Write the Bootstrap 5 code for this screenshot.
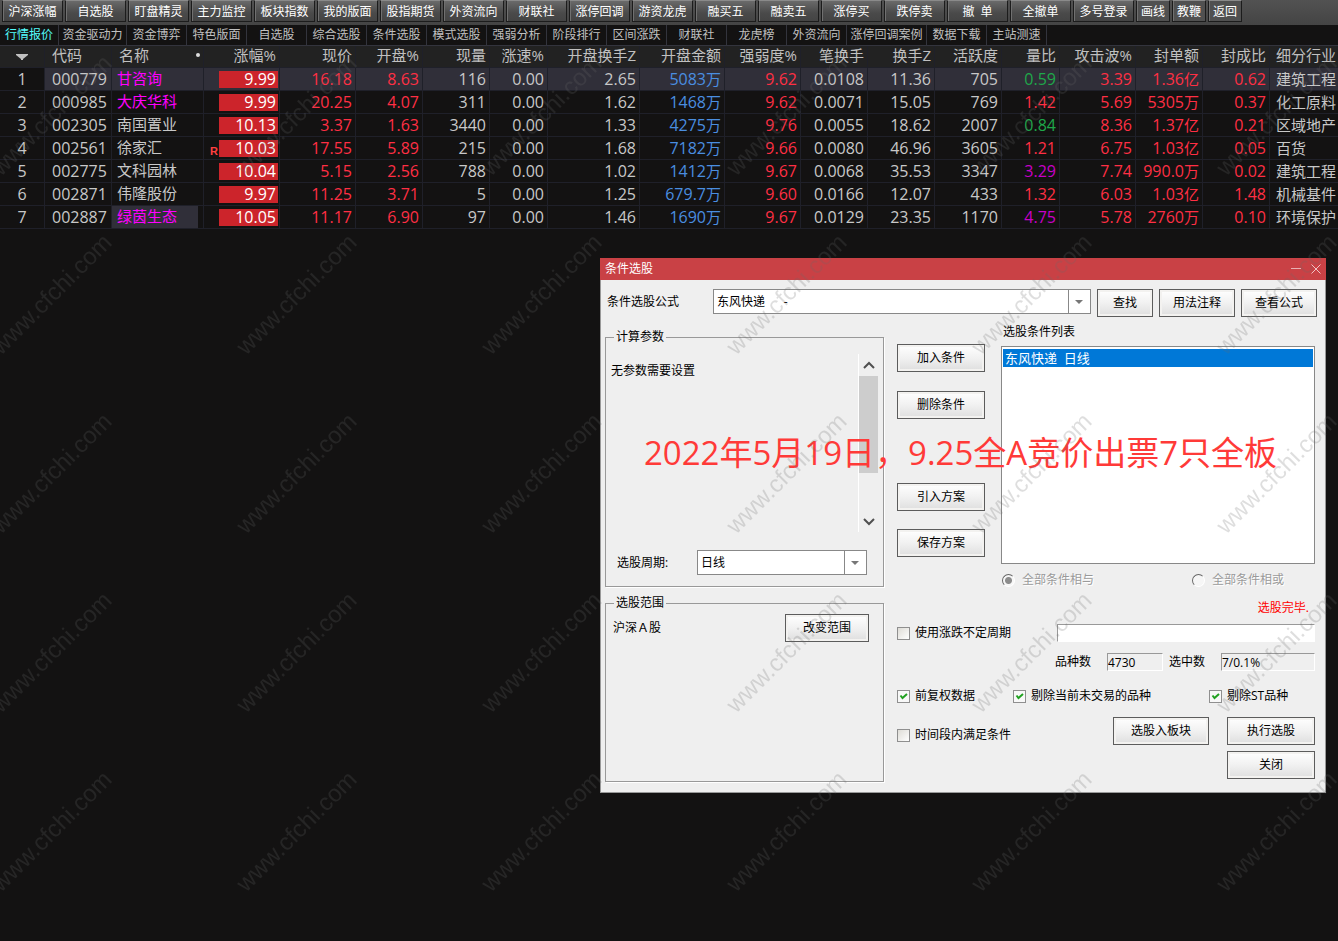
<!DOCTYPE html>
<html lang="zh-CN">
<head>
<meta charset="utf-8">
<meta name="viewport" content="width=device-width, initial-scale=1">
<title>条件选股</title>
<link href="https://cdn.jsdelivr.net/npm/bootstrap@5.3.0/dist/css/bootstrap.min.css" rel="stylesheet">
<style>
body{background:#131212;color:#c0c0c0;font-family:"Open Sans","Noto Sans CJK SC",sans-serif;font-size:12px;line-height:18px;overflow-x:hidden}
/* toolbar */
.toolbar{background:linear-gradient(#525252,#444);height:25px;padding:0 2px;gap:2px}
.tool-btn{flex:none;width:61px;height:22px;padding:0;font-size:12px;line-height:22px;color:#fff;border:1px solid #1c1c1c;border-top-color:#8a8a8a;border-radius:0;background:linear-gradient(#6a6a6a,#4a4a4a 60%,#444);box-shadow:inset 1px 0 0 #707070;white-space:pre}
.tool-btn.narrow{width:34px;background:#505050}
.tool-btn:hover{color:#fff}
/* view tabs */
.views{height:21px;border-bottom:1px solid #33343d}
.views a{flex:none;width:60px;text-align:center;line-height:20px;color:#c0c0c0;text-decoration:none;border-right:1px solid #33343d;white-space:nowrap}
.views a.w-first{width:59px}.views a.w-mid{width:68px}.views a.w-long{width:80px}
.views a.active{color:#54fcfc}
/* quotes */
.quotes{table-layout:fixed;width:100%;margin:0;border-collapse:separate;border-spacing:0;font-size:16px;line-height:22px;color:#c8c8c8}
.q45{width:45px}.q58{width:58px}.q67{width:67px}.q76{width:76px}.q85{width:85px}.q92{width:92px}
.quotes th,.quotes td{padding:0 3px 0 0;height:23px;border-right:1px solid #1f2029;border-bottom:1px solid #1f2029;text-align:right;white-space:nowrap;overflow:hidden}
.quotes th{font-size:15px;font-weight:400;background:#222;line-height:18px;height:22px;color:#c0c0c0;vertical-align:top}
.quotes .idx{text-align:center;padding:0;vertical-align:middle}
.quotes .code{text-align:left;padding-left:7px}
.quotes .stock{text-align:left;padding-left:5px;font-size:15px;line-height:20px;vertical-align:top}
.quotes th.stock{padding-left:7px;line-height:18px}
.quotes .ind{text-align:left;padding-left:6px;font-size:15px;border-right:0}
.quotes .chg{padding:0 1px 0 15px;position:relative;overflow:visible}
.quotes th.chg{padding:0 3px 0 0}
.chg div{background:#cc242b;color:#fff;line-height:17px;height:17px;padding-right:2px}
.chg i{position:absolute;left:6px;bottom:1px;font:bold 11px/14px "Liberation Sans",sans-serif;color:#ff4040}
.unit{font-size:15px}
.picked td:not(.idx){background:#302f39}
.quotes .hold{color:#f0f}
.held{background:linear-gradient(#302f39,#302f39) 0 0/86px 100% no-repeat}
.r{color:#ff2f44}.b{color:#4a8ee0}.g{color:#1fa84a}.m{color:#c800c8}
/* dialog */
.dlg{width:726px;max-width:100%;margin:29px 12px 0 auto;background:#efefef;border:1px solid #999;border-top:0;color:#000}
.dlg-title{height:22px;margin:0 -1px;padding:0 5px;background:#c94145;color:#fff}
.dlg-title button{border:0;background:none;padding:0;width:10px;height:20px;display:flex;align-items:center}
.dlg-title button+button{margin-left:10px}
.dlg-body{padding:9px 8px 10px 4px}
.push{height:28px;padding:0;font-size:12px;line-height:24px;color:#000;border:1px solid #5c5c5c;border-radius:0;background:linear-gradient(#fff,#f1f1f1 50%,#dedede);box-shadow:inset 0 0 0 2px #f3f2f0;width:88px}
.push.s{width:56px}.push.m2{width:76px}.push.l{width:96px}.push.ml{width:84px}
.pick{height:25px;padding:0 24px 0 3px;font-size:12px;line-height:23px;color:#000;border:1px solid #888;border-radius:0;background:url("data:image/svg+xml,%3Csvg xmlns='http://www.w3.org/2000/svg' width='22' height='23'%3E%3Cpath d='M.5 0v23' stroke='%23888'/%3E%3Cpath d='M7 10h8l-4 4z' fill='%23777'/%3E%3C/svg%3E") right center/22px 23px no-repeat #fff}
.formula-label{flex:none;width:108px;padding:4px 0 0 2px}
.acts{gap:6px;margin-left:6px}
.col-left{flex:none;width:279px}
.group{border:1px solid #999;box-shadow:1px 1px 0 #fff;padding:0 5px;margin:0}
.group legend{float:none;width:auto;margin:0 0 0 3px;padding:0 2px;font-size:12px;line-height:18px}
.params{height:259px;margin-top:11px}
.scope{height:188px;margin-top:7px}
.param-view{height:178px;margin-top:8px}
.vbar{width:20px;border-left:1px solid #fff}
.vbar span{height:97px;background:#cdcdcd}
.period{margin:18px 11px 0 6px}.period label{width:80px}.period .pick{width:170px}
.scope-row{margin:2px 9px 0 2px}
.col-right{padding:5px 2px 0 13px}
.moves{width:88px;padding-top:22px}
.moves .push+.push{margin-top:18px}.moves .push.far{margin-top:64px}.moves .push.near{margin-top:19px}
.list-label{padding-left:2px;line-height:20px}
.cond{height:218px;border:1px solid #888;background:#fff;padding:2px 1px;margin:4px 0 0;list-style:none;font-size:13px}
.cond li{background:#0078d7;color:#fff;padding:0 2px;line-height:18px;white-space:pre}
.tick{appearance:none;flex:none;width:13px;height:13px;margin:0 5px 0 0;border:1px solid #8f8f8f;background:linear-gradient(135deg,#dedcd6,#fff)}
.tick:checked{background:url("data:image/svg+xml,%3Csvg xmlns='http://www.w3.org/2000/svg' width='11' height='11'%3E%3Cpath d='M2.5 4.5l2 2.5L9 3' fill='none' stroke='%2321a121' stroke-width='2'/%3E%3C/svg%3E") center no-repeat #f8f8f8}
.dot{appearance:none;flex:none;width:13px;height:13px;margin:0 7px 0 1px;border:1px solid;border-color:#666 #fff #fff #666;border-radius:50%;background:#f6f6f6}
.dot:checked{background:radial-gradient(circle,#8c8c8c 3px,#f6f6f6 4px)}
.mute{color:#9a9a9a;text-shadow:1px 1px 0 #fff}
.sunk{height:18px;padding:0;font-size:12px;line-height:16px;border:1px solid;border-color:#999 #fff #fff #999;border-radius:0;background:#efefef;color:#000}
.sunk.blank{background:#fff;min-width:0}
.c116{width:116px}.c196{width:196px}.c160{width:160px}.c52{width:52px}.c56{width:56px}.c94{width:94px}.c190{width:190px}
.radios{margin-top:6px;height:20px}
.status{margin-top:9px;color:#f00;padding-right:6px}
.run-row{margin-top:6px;height:20px}
.count-row{margin-top:10px}
.hits{margin-left:6px}
.tick-row{margin-top:16px}
.btn-row{margin-top:12px;height:28px}
.go{margin-left:18px}
.close-row{margin-top:6px}
.caption{position:absolute;left:43px;top:172px;font-size:33px;line-height:46px;color:#ff3a38;white-space:nowrap;pointer-events:none;margin:0}
.wm{position:fixed;inset:0;width:100%;height:100%;pointer-events:none}
</style>
</head>
<body class="min-vh-100">
<nav class="toolbar d-flex overflow-hidden">
<button class="btn tool-btn">沪深涨幅</button><button class="btn tool-btn">自选股</button><button class="btn tool-btn">盯盘精灵</button><button class="btn tool-btn">主力监控</button><button class="btn tool-btn">板块指数</button><button class="btn tool-btn">我的版面</button><button class="btn tool-btn">股指期货</button><button class="btn tool-btn">外资流向</button><button class="btn tool-btn">财联社</button><button class="btn tool-btn">涨停回调</button><button class="btn tool-btn">游资龙虎</button><button class="btn tool-btn">融买五</button><button class="btn tool-btn">融卖五</button><button class="btn tool-btn">涨停买</button><button class="btn tool-btn">跌停卖</button><button class="btn tool-btn">撤  单</button><button class="btn tool-btn">全撤单</button><button class="btn tool-btn">多号登录</button><button class="btn tool-btn narrow">画线</button><button class="btn tool-btn narrow">教鞭</button><button class="btn tool-btn narrow">返回</button>
</nav>
<nav class="views d-flex overflow-hidden">
<a href="#" class="active w-first">行情报价</a><a href="#" class="w-mid">资金驱动力</a><a href="#">资金博弈</a><a href="#">特色版面</a><a href="#">自选股</a><a href="#">综合选股</a><a href="#">条件选股</a><a href="#">模式选股</a><a href="#">强弱分析</a><a href="#">阶段排行</a><a href="#">区间涨跌</a><a href="#">财联社</a><a href="#">龙虎榜</a><a href="#">外资流向</a><a href="#" class="w-long">涨停回调案例</a><a href="#">数据下载</a><a href="#">主站测速</a>
</nav>
<table class="quotes">
<colgroup><col class="q45"><col class="q67"><col class="q92"><col class="q76"><col class="q76"><col class="q67"><col class="q67"><col class="q58"><col class="q92"><col class="q85"><col class="q76"><col class="q67"><col class="q67"><col class="q67"><col class="q58"><col class="q76"><col class="q67"><col class="q67"><col></colgroup>
<thead><tr><th class="idx"><svg width="12" height="8" viewBox="0 0 12 8" class="d-block mx-auto"><path d="M0 1h12v1L7 6v1H5V6L0 2z" fill="#c0c0c0"/></svg></th><th class="code">代码</th><th class="stock"><span class="d-flex justify-content-between align-items-center">名称<svg width="4" height="4"><circle cx="2" cy="2" r="2" fill="#ddd"/></svg></span></th><th class="chg">涨幅%</th><th>现价</th><th>开盘%</th><th>现量</th><th>涨速%</th><th>开盘换手Z</th><th>开盘金额</th><th>强弱度%</th><th>笔换手</th><th>换手Z</th><th>活跃度</th><th>量比</th><th>攻击波%</th><th>封单额</th><th>封成比</th><th class="ind">细分行业</th></tr></thead>
<tbody>
<tr class="picked"><td class="idx">1</td><td class="code">000779</td><td class="stock hold">甘咨询</td><td class="chg"><div>9.99</div></td><td class="r">16.18</td><td class="r">8.63</td><td>116</td><td>0.00</td><td>2.65</td><td class="b">5083<span class="unit">万</span></td><td class="r">9.62</td><td>0.0108</td><td>11.36</td><td>705</td><td class="g">0.59</td><td class="r">3.39</td><td class="r">1.36<span class="unit">亿</span></td><td class="r">0.62</td><td class="ind">建筑工程</td></tr>
<tr><td class="idx">2</td><td class="code">000985</td><td class="stock hold">大庆华科</td><td class="chg"><div>9.99</div></td><td class="r">20.25</td><td class="r">4.07</td><td>311</td><td>0.00</td><td>1.62</td><td class="b">1468<span class="unit">万</span></td><td class="r">9.62</td><td>0.0071</td><td>15.05</td><td>769</td><td class="r">1.42</td><td class="r">5.69</td><td class="r">5305<span class="unit">万</span></td><td class="r">0.37</td><td class="ind">化工原料</td></tr>
<tr><td class="idx">3</td><td class="code">002305</td><td class="stock">南国置业</td><td class="chg"><div>10.13</div></td><td class="r">3.37</td><td class="r">1.63</td><td>3440</td><td>0.00</td><td>1.33</td><td class="b">4275<span class="unit">万</span></td><td class="r">9.76</td><td>0.0055</td><td>18.62</td><td>2007</td><td class="g">0.84</td><td class="r">8.36</td><td class="r">1.37<span class="unit">亿</span></td><td class="r">0.21</td><td class="ind">区域地产</td></tr>
<tr><td class="idx">4</td><td class="code">002561</td><td class="stock">徐家汇</td><td class="chg"><i>R</i><div>10.03</div></td><td class="r">17.55</td><td class="r">5.89</td><td>215</td><td>0.00</td><td>1.68</td><td class="b">7182<span class="unit">万</span></td><td class="r">9.66</td><td>0.0080</td><td>46.96</td><td>3605</td><td class="r">1.21</td><td class="r">6.75</td><td class="r">1.03<span class="unit">亿</span></td><td class="r">0.05</td><td class="ind">百货</td></tr>
<tr><td class="idx">5</td><td class="code">002775</td><td class="stock">文科园林</td><td class="chg"><div>10.04</div></td><td class="r">5.15</td><td class="r">2.56</td><td>788</td><td>0.00</td><td>1.02</td><td class="b">1412<span class="unit">万</span></td><td class="r">9.67</td><td>0.0068</td><td>35.53</td><td>3347</td><td class="m">3.29</td><td class="r">7.74</td><td class="r">990.0<span class="unit">万</span></td><td class="r">0.02</td><td class="ind">建筑工程</td></tr>
<tr><td class="idx">6</td><td class="code">002871</td><td class="stock">伟隆股份</td><td class="chg"><div>9.97</div></td><td class="r">11.25</td><td class="r">3.71</td><td>5</td><td>0.00</td><td>1.25</td><td class="b">679.7<span class="unit">万</span></td><td class="r">9.60</td><td>0.0166</td><td>12.07</td><td>433</td><td class="r">1.32</td><td class="r">6.03</td><td class="r">1.03<span class="unit">亿</span></td><td class="r">1.48</td><td class="ind">机械基件</td></tr>
<tr><td class="idx">7</td><td class="code">002887</td><td class="stock hold held">绿茵生态</td><td class="chg"><div>10.05</div></td><td class="r">11.17</td><td class="r">6.90</td><td>97</td><td>0.00</td><td>1.46</td><td class="b">1690<span class="unit">万</span></td><td class="r">9.67</td><td>0.0129</td><td>23.35</td><td>1170</td><td class="m">4.75</td><td class="r">5.78</td><td class="r">2760<span class="unit">万</span></td><td class="r">0.10</td><td class="ind">环境保护</td></tr>
</tbody>
</table>

<section class="dlg position-relative">
<header class="dlg-title d-flex align-items-center">
<span class="me-auto">条件选股</span>
<button aria-label="最小化"><svg width="10" height="10"><path d="M0 4.5h10" stroke="#e9b0b2"/></svg></button>
<button aria-label="关闭窗口"><svg width="10" height="10"><path d="M.5.5l9 9M9.5.5l-9 9" stroke="#f0c4c5"/></svg></button>
</header>
<div class="dlg-body">
<div class="d-flex">
<label for="formula" class="formula-label">条件选股公式</label>
<select id="formula" class="form-select pick flex-fill"><option>东风快递&nbsp;&nbsp;&nbsp;&nbsp;&nbsp;&nbsp;-</option></select>
<div class="d-flex acts"><button class="btn push s">查找</button><button class="btn push m2">用法注释</button><button class="btn push m2">查看公式</button></div>
</div>
<div class="d-flex">
<div class="col-left">
<fieldset class="group params">
<legend>计算参数</legend>
<div class="param-view d-flex justify-content-between">
<div class="pt-2">无参数需要设置</div>
<div class="vbar d-flex flex-column">
<svg width="12" height="22" class="mx-auto flex-shrink-0"><path d="M1 14l5-5 5 5" fill="none" stroke="#505050" stroke-width="2"/></svg>
<span></span>
<svg width="12" height="22" class="mt-auto mx-auto flex-shrink-0"><path d="M1 9l5 5 5-5" fill="none" stroke="#505050" stroke-width="2"/></svg>
</div>
</div>
<div class="d-flex align-items-center period">
<label for="period">选股周期:</label>
<select id="period" class="form-select pick"><option>日线</option></select>
</div>
</fieldset>
<fieldset class="group scope">
<legend>选股范围</legend>
<div class="d-flex justify-content-between align-items-center scope-row"><span>沪深Ａ股</span><button class="btn push ml">改变范围</button></div>
</fieldset>
</div>
<div class="col-right flex-fill">
<div class="d-flex">
<div class="moves d-flex flex-column">
<button class="btn push">加入条件</button><button class="btn push near">删除条件</button><button class="btn push far">引入方案</button><button class="btn push">保存方案</button>
</div>
<div class="flex-fill ms-3">
<div class="list-label">选股条件列表</div>
<ul class="cond"><li>东风快递  日线</li></ul>
<div class="d-flex mute radios">
<label class="c190 d-flex align-items-center"><input type="radio" name="join" class="dot" checked disabled>全部条件相与</label>
<label class="d-flex align-items-center"><input type="radio" name="join" class="dot" disabled>全部条件相或</label>
</div>
</div>
</div>
<div class="status text-end">选股完毕.</div>
<div class="d-flex align-items-center run-row">
<label class="c160 d-flex align-items-center"><input type="checkbox" class="tick">使用涨跌不定周期</label>
<input class="sunk blank flex-fill" aria-label="进度">
</div>
<div class="d-flex align-items-center justify-content-end count-row">
<label for="total" class="c52">品种数</label><input id="total" class="sunk c56" value="4730" readonly>
<label for="hits" class="c52 hits">选中数</label><input id="hits" class="sunk c94" value="7/0.1%" readonly>
</div>
<div class="d-flex tick-row">
<label class="c116 d-flex align-items-center"><input type="checkbox" class="tick" checked>前复权数据</label>
<label class="c196 d-flex align-items-center"><input type="checkbox" class="tick" checked>剔除当前未交易的品种</label>
<label class="d-flex align-items-center"><input type="checkbox" class="tick" checked>剔除ST品种</label>
</div>
<div class="d-flex btn-row">
<label class="d-flex align-items-center me-auto pt-2"><input type="checkbox" class="tick">时间段内满足条件</label>
<button class="btn push l">选股入板块</button><button class="btn push go">执行选股</button>
</div>
<div class="d-flex justify-content-end close-row"><button class="btn push">关闭</button></div>
</div>
</div>
</div>
<p class="caption">2022年5月19日，9.25全A竞价出票7只全板</p>
</section>
<svg class="wm" aria-hidden="true"><defs><pattern id="wm" x="-20" y="50" width="245" height="179" patternUnits="userSpaceOnUse"><text transform="translate(21 127) rotate(-45)" font-family="Liberation Sans, sans-serif" font-size="24" fill="#686868" opacity=".22">www.cfchi.com</text></pattern></defs><rect width="100%" height="100%" fill="url(#wm)"/></svg>
<script src="https://cdn.jsdelivr.net/npm/bootstrap@5.3.0/dist/js/bootstrap.bundle.min.js"></script>
</body>
</html>
